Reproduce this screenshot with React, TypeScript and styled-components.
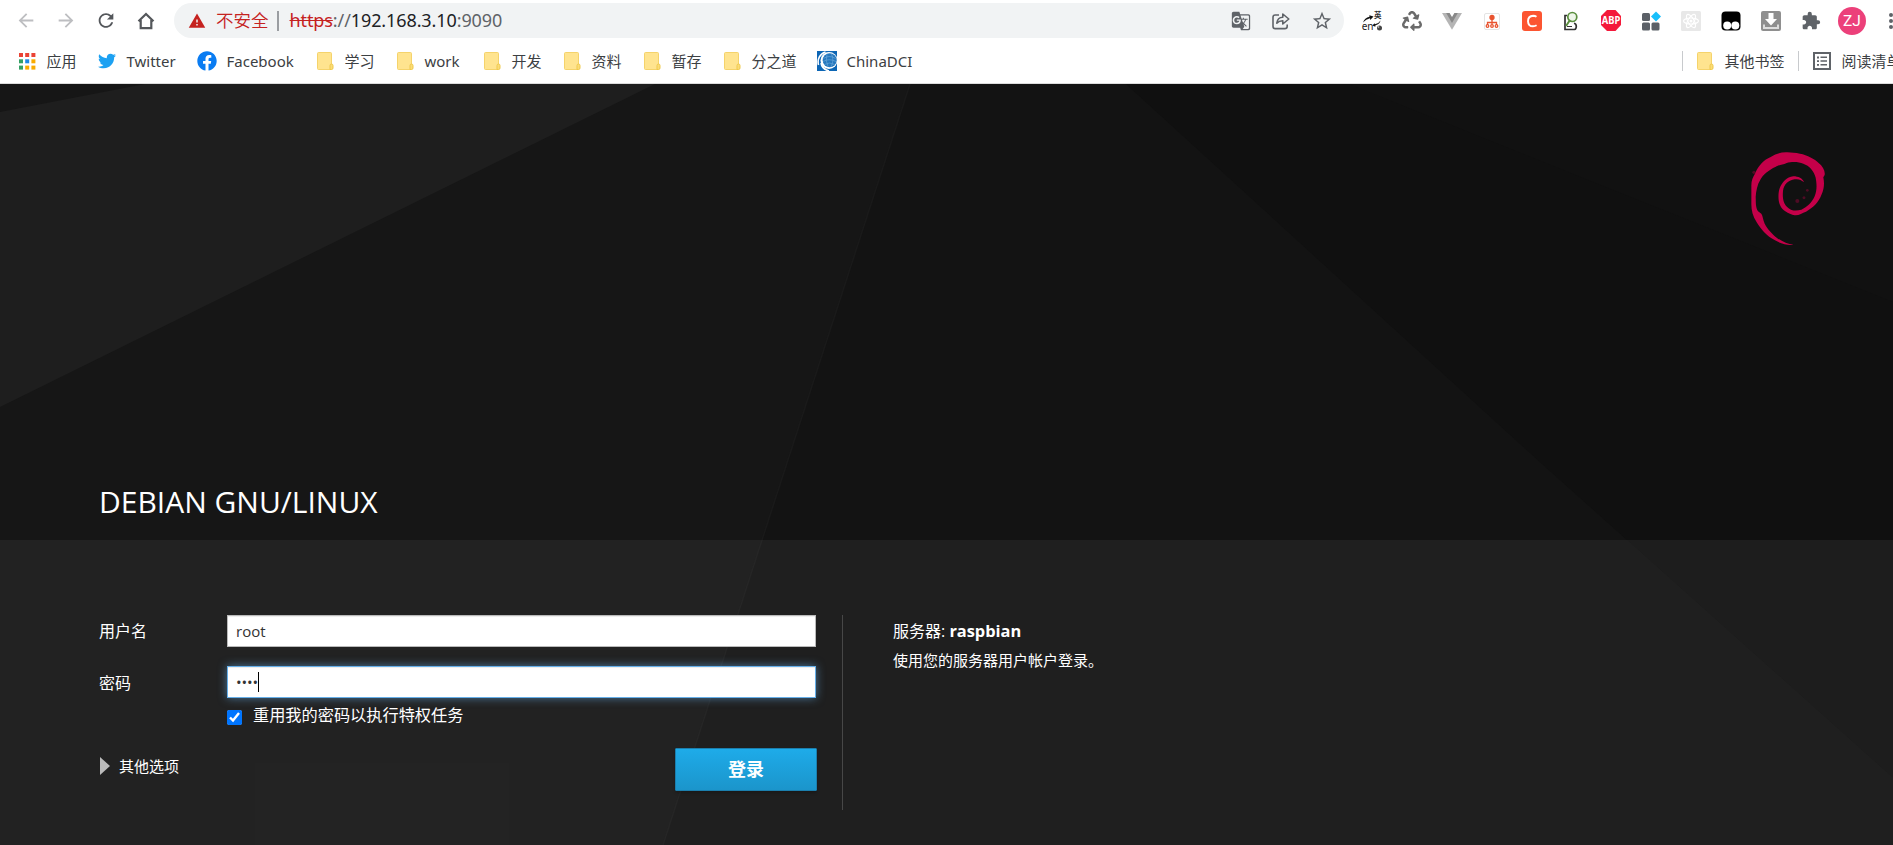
import React from "react";
import styled, { createGlobalStyle, css } from "styled-components";
import { FaTwitter, FaFacebook, FaRecycle } from "react-icons/fa";
import { MdExtension, MdStarBorder, MdGTranslate, MdArrowBack, MdArrowForward, MdRefresh, MdWarning } from "react-icons/md";

const GlobalStyle = createGlobalStyle`
  html, body { margin: 0; padding: 0; background: #fff; }
  body { overflow: hidden; font-family: "Open Sans", "Noto Sans CJK SC", sans-serif; }
  * { box-sizing: border-box; }
`;

const Window = styled.div`
  display: flex;
  flex-direction: column;
  width: 1893px;
  height: 845px;
  overflow: hidden;
`;

const Chrome = styled.header`
  display: flex;
  flex-direction: column;
  flex: none;
  height: 84px;
  background: #fff;
  border-bottom: 1px solid #dcdcdc;
  font-family: "Noto Sans", "Noto Sans CJK SC", sans-serif;
`;

const Toolbar = styled.div`
  display: flex;
  align-items: center;
  height: 41px;
  padding-left: 15px;
`;

const NavButton = styled.span<{ $muted?: boolean }>`
  display: flex;
  justify-content: center;
  flex: none;
  width: 22px;
  margin-right: 18px;
  color: ${(p) => (p.$muted ? "#bdbec1" : "#54575b")};
`;

const Omnibox = styled.div`
  display: flex;
  align-items: center;
  flex: none;
  width: 1170px;
  height: 35px;
  margin-left: -1px;
  padding: 0 11px 0 14px;
  border-radius: 18px;
  background: #f1f3f4;
  font-size: 17.5px;
  line-height: 35px;
  white-space: nowrap;
`;

const NotSecure = styled.span`
  margin-left: 10px;
  color: #c5221f;
  font-weight: 350;
  line-height: 33px;
`;

const OmniDivider = styled.span`
  width: 2px;
  height: 20px;
  margin: 0 11px 0 8px;
  background: #9a9da1;
`;

const Url = styled.span`
  flex: 1;
  color: #5f6368;
  font-size: 18px;
  line-height: 33px;
  letter-spacing: -0.1px;
  s { color: #c5221f; }
  b { font-weight: 400; color: #202124; }
`;

const OmniActions = styled.span`
  display: flex;
  align-items: center;
  gap: 20px;
  color: #5f6368;
  svg { display: block; }
`;

const Extensions = styled.div`
  display: flex;
  align-items: center;
  gap: 19.9px;
  margin-left: 18px;
  svg { display: block; flex: none; }
`;

const Avatar = styled.span`
  flex: none;
  width: 28px;
  height: 28px;
  margin-left: 17px;
  border-radius: 50%;
  background: #ec407a;
  color: #fff;
  font: 15.5px/28px Roboto, sans-serif;
  text-align: center;
`;

const MenuDots = styled.span`
  display: flex;
  flex-direction: column;
  gap: 2px;
  margin-left: -4px;
  i { width: 4px; height: 4px; border-radius: 50%; background: #5f6368; }
`;

const BookmarksBar = styled.nav`
  display: flex;
  align-items: center;
  height: 40px;
  padding-left: 17px;
  font-size: 15px;
  line-height: 22px;
  color: #3c4043;
  white-space: nowrap;
`;

const Bookmark = styled.span<{ $width?: number }>`
  display: flex;
  align-items: center;
  flex: none;
  gap: 9.5px;
  ${(p) => p.$width && css`width: ${p.$width}px;`}
`;

const BookmarkName = styled.span`
  padding-bottom: 1px;
`;

const BookmarkIcon = styled.span`
  display: flex;
  justify-content: center;
  width: 20px;
  svg { display: block; }
`;

const Spacer = styled.span`
  flex: 1;
`;

const BarDivider = styled.span<{ $gap: number }>`
  flex: none;
  width: 1px;
  height: 20px;
  margin-right: ${(p) => p.$gap}px;
  background: #c8cacd;
`;

const Page = styled.main`
  position: relative;
  display: flex;
  flex-direction: column;
  flex: 1;
  color: #fff;
`;

const Backdrop = styled.svg`
  position: absolute;
  inset: 0;
  display: block;
`;

const Brand = styled.section`
  position: relative;
  display: flex;
  flex-direction: column;
  justify-content: space-between;
  height: 456px;
  padding: 68px 68px 16px 99px;
`;

const Swirl = styled.svg`
  align-self: flex-end;
  display: block;
  width: 74px;
  height: 93.3px;
  overflow: visible;
`;

const Title = styled.h1`
  margin: 0;
  font-size: 30px;
  font-weight: 400;
  line-height: 44px;
`;

const LoginPanel = styled.section`
  position: relative;
  display: flex;
  align-items: flex-start;
  flex: 1;
  padding: 75px 0 0 99px;
  background: rgba(255, 255, 255, 0.055);
`;

const Form = styled.div`
  width: 718px;
`;

const Field = styled.div`
  display: flex;
  align-items: center;
  height: 32px;
  margin-bottom: 19px;
`;

const Label = styled.label<{ $drop?: number }>`
  width: 128px;
  padding-top: ${(p) => p.$drop ?? 0}px;
  font-size: 16px;
  line-height: 32px;
`;

const TextBox = styled.div<{ $focused?: boolean }>`
  display: flex;
  align-items: center;
  width: 589px;
  height: 32px;
  padding: 0 8px;
  border: 1px solid #bababa;
  background: #fff;
  color: #333;
  font-size: 15px;
  line-height: 30px;
  box-shadow: inset 0 1px 1px rgba(0, 0, 0, 0.075);
  ${(p) =>
    p.$focused &&
    css`
      border-color: #66afe9;
      box-shadow: inset 0 1px 1px rgba(0, 0, 0, 0.075), 0 0 10px rgba(102, 175, 233, 0.6);
      letter-spacing: -0.15px;
    `}
`;

const Caret = styled.i`
  width: 1px;
  height: 20px;
  background: #000;
`;

const Reuse = styled.label`
  display: flex;
  align-items: center;
  height: 22px;
  margin: -13px 0 0 128px;
  font-size: 16.2px;
  line-height: 22px;
  input { width: 15px; height: 15px; margin: 4px 11px 0 0; }
`;

const Actions = styled.div`
  display: flex;
  justify-content: space-between;
  align-items: flex-start;
  margin-top: 22px;
`;

const Options = styled.span`
  display: flex;
  align-items: center;
  gap: 9px;
  height: 36px;
  padding-left: 1px;
  font-size: 15px;
  line-height: 34px;
  &::before {
    content: "";
    border-left: 10px solid #bbb;
    border-top: 9px solid transparent;
    border-bottom: 9px solid transparent;
  }
`;

const LoginButton = styled.button`
  width: 142px;
  height: 43px;
  padding: 0;
  border: 1px solid #1b7fae;
  border-radius: 1px;
  background: linear-gradient(#1eabe9, #1b95cb);
  box-shadow: 0 2px 3px rgba(0, 0, 0, 0.2);
  color: #fff;
  font: 700 18px/41px "Open Sans", "Noto Sans CJK SC", sans-serif;
`;

const ServerInfo = styled.aside`
  height: 195px;
  margin-left: 25px;
  padding: 4px 0 0 50px;
  border-left: 1px solid #474747;
  font-size: 16px;
  line-height: 24px;
  b { font-size: 16.4px; }
  p { margin: 6px 0 0; font-size: 15px; line-height: 22px; }
`;

const DebianSwirl = () => (
  <Swirl viewBox="93 65 222 280" fill="#c40049">
    <path d="M220 343C208 346 185 342 165 330C140 318 122 296 110 276C98 258 94 240 94 222V165C94 150 98 142 106 128C115 106 132 88 152 80C168 70 185 65 202 66C215 68 226 67 240 70C262 74 284 86 296 98C308 108 316 120 314 134L310 141C314 160 312 176 305 192C296 216 280 232 258 244C246 248 238 256 224 255C205 250 186 240 180 224C174 212 174 188 179 174C186 156 200 140 220 138C235 138 248 144 252 156C243 149 236 145 224 147C206 150 192 160 189 182C187 204 190 222 204 232C214 242 230 242 244 238C262 230 276 216 284 198C292 180 290 158 287 142C282 122 268 106 250 100C236 94 214 94 200 98C188 104 180 102 166 110C148 118 128 134 121 148C112 162 108 182 107 200C108 216 106 230 114 243L124 250C129 258 128 266 134 280C142 296 158 312 170 322C186 334 204 342 220 343Z" />
    <g opacity=".35">
      <circle cx="232" cy="212" r="6" />
      <circle cx="252" cy="202" r="4.500" />
      <circle cx="262" cy="180" r="4" />
      <circle cx="102" cy="126" r="5" />
    </g>
  </Swirl>
);

const HomeIcon = () => (
  <svg width="20" height="20" viewBox="0 0 20 20" fill="none" stroke="currentColor" strokeWidth="2.2">
    <path d="M2.5 10.3 10 3l7.5 7.3M4.7 9v8.2h10.6V9" />
  </svg>
);

const ShareIcon = () => (
  <svg width="20" height="20" viewBox="0 0 20 20" fill="none" stroke="currentColor" strokeWidth="1.6" strokeLinejoin="round">
    <path d="M8 4H4.2Q2 4 2 6.2v9Q2 17.6 4.2 17.6h9.6q2.4 0 2.4-2.4v-1.700" />
    <path d="M5.8 12.2c.5-4.2 3-6 6-6V3l6 5-6 5V9.800c-2.800 0-4.500.7-6 2.400z" />
  </svg>
);

const AppsIcon = () => {
  const colors = ["#ea4335", "#ea4335", "#ea4335", "#34a064", "#1e88e5", "#f9ab00", "#34a064", "#f9ab00", "#f9ab00"];
  return (
    <svg width="18" height="18" viewBox="0 0 18 18">
      {colors.map((c, i) => (
        <rect key={i} x={1 + (i % 3) * 6.2} y={1 + Math.floor(i / 3) * 6.3} width="4" height="4" fill={c} />
      ))}
    </svg>
  );
};

const FolderIcon = () => (
  <svg width="18" height="20" viewBox="0 0 18 20">
    <rect x="1.5" y="1.5" width="14" height="17" rx="1" fill="#ffe48f" stroke="#f5d36b" />
    <path d="M14 18.500v-4q0-1.500 1.500-1.500t1.500 1.500V17q0 1.500-1.500 1.500z" fill="#fbdc77" stroke="#efc94c" />
  </svg>
);

const GlobeIcon = () => (
  <svg width="20" height="20" viewBox="0 0 20 20">
    <rect width="20" height="20" fill="#0d66b5" />
    <circle cx="12" cy="9.500" r="8.500" fill="#fff" />
    <circle cx="12.700" cy="9.200" r="7" fill="#2678be" />
    <path d="M6.500 7.500q6-4 12 0M6 10.500q6-3.500 13 0M7.500 13.500q5-3 10 0M10 3.500q-2 6 1 12M14.500 3q3 6-.5 13" fill="none" stroke="#7db4e0" strokeWidth=".5" />
    <path d="M1.500 14C0 8 3 2.500 8.500 1M4 12q1 6 8 8" fill="none" stroke="#fff" strokeWidth="1.600" />
    <path d="M14.500 19.500Q19 17 20 12v8z" fill="#0d66b5" />
  </svg>
);

const ReadingListIcon = () => (
  <svg width="20" height="20" viewBox="0 0 20 20" fill="#5f6368">
    <rect x="2" y="2" width="16" height="16" fill="none" stroke="#5f6368" strokeWidth="2" />
    <path d="M5 5.500h2v2H5zM8.500 5.500H15v1.600H8.500zM5 9.200h2v1.800H5zM8.500 9.200H15v1.600H8.500zM5 13h2v1.800H5zM8.500 13H15v1.600H8.500z" />
  </svg>
);

const TranslateExtension = () => (
  <svg width="20" height="20" viewBox="0 0 20 20" overflow="visible">
    <text x="-.3" y="19" fontSize="10" fontFamily="Noto Sans" fill="#222">en</text>
    <text x="12" y="7" fontSize="7.500" fontWeight="700" fontFamily="Noto Sans CJK SC" fill="#333">英</text>
    <path d="M1 11.500Q2.500 6.800 7.500 5.700L7.300 4.300 11.500 5.500 8.300 9 8 7.300Q4 8 1 11.500zM18.500 9.500q-.5 3.500-5 4.800l-.2 1.500-3-1.300 2.400-2.200.2 1q4-.8 5.600-3.800z" fill="#111" />
    <circle cx="17.500" cy="17" r="2.500" fill="#444" /><circle cx="16.500" cy="16" r=".8" fill="#ddd" />
  </svg>
);

const VueIcon = () => (
  <svg width="20" height="20" viewBox="0 0 20 20">
    <path d="M0 2h20L10 18.800z" fill="#b5b5b5" />
    <path d="M4.200 2h11.600L10 12z" fill="#888" />
    <path d="M7.600 2h4.800L10 6z" fill="#fff" />
  </svg>
);

const TreeIcon = () => (
  <svg width="20" height="20" viewBox="0 0 20 20">
    <rect x="2.500" y="2.500" width="15" height="16" rx="1.500" fill="#fff" stroke="#e4e4e4" />
    <g fill="none" stroke="#e8532f" strokeWidth="1.300">
      <circle cx="10" cy="6.500" r="2" fill="#e8532f" />
      <path d="M10 8v5.500M5.500 14v-2.500h9V14" />
      <circle cx="5.500" cy="15" r="1.300" /><circle cx="10" cy="15" r="1.300" /><circle cx="14.500" cy="15" r="1.300" />
    </g>
  </svg>
);

const CIcon = () => (
  <svg width="20" height="20" viewBox="0 0 20 20">
    <rect width="20" height="20" rx="3" fill="#fc5531" />
    <path d="M14.500 5.700Q13 4.700 11.200 4.700 6 5 6 10.200 6.200 15.300 11 15.300q2 0 3.600-1" fill="none" stroke="#fff" strokeWidth="1.900" />
  </svg>
);

const SearchPageIcon = () => (
  <svg width="20" height="20" viewBox="0 0 20 20" fill="none">
    <path d="M6 4.500H4v14h9.500q1.800-.3 1.800-3.200 0-2.500-2.300-3.100" stroke="#333" strokeWidth="1.700" />
    <circle cx="11.300" cy="6" r="4.500" fill="#eef6e9" stroke="#5b8f3f" strokeWidth="1.700" />
    <path d="M8.700 9.500 5 15" stroke="#5b8f3f" strokeWidth="2" /><path d="M6 15.500h5" stroke="#333" />
  </svg>
);

const AbpIcon = () => (
  <svg width="20" height="21" viewBox="0 0 20 21">
    <path d="M6 0h8.500L20 6v9l-5.500 6H6L0 15V6z" fill="#f4193b" />
    <text x="10" y="14.200" textAnchor="middle" fontSize="10" fontWeight="700" fontFamily="Noto Sans" fill="#fff" textLength="18.500" lengthAdjust="spacingAndGlyphs">ABP</text>
  </svg>
);

const TilesIcon = () => (
  <svg width="20" height="20" viewBox="0 0 20 20" fill="#5b6067">
    <rect x="1" y="2" width="8" height="8" rx="1.500" /><rect x="1" y="11.500" width="8" height="8" rx="1.500" />
    <rect x="10.500" y="11.500" width="8" height="8" rx="1.500" />
    <path d="M15 .5 20 5.500l-5 5-5-5z" fill="#18bffb" />
  </svg>
);

const ReactDevIcon = () => (
  <svg width="20" height="20" viewBox="0 0 20 20">
    <rect width="20" height="20" rx="1.500" fill="#e8e8e8" />
    <g fill="none" stroke="#fff" strokeWidth="1.200">
      <ellipse cx="10" cy="10" rx="7.500" ry="3" /><ellipse cx="10" cy="10" rx="7.500" ry="3" transform="rotate(60 10 10)" />
      <ellipse cx="10" cy="10" rx="7.500" ry="3" transform="rotate(120 10 10)" />
    </g>
    <circle cx="10" cy="10" r="1.500" fill="#fff" />
  </svg>
);

const MonkeyIcon = () => (
  <svg width="20" height="20" viewBox="0 0 20 20">
    <rect x=".5" y=".5" width="19" height="19" rx="4" />
    <circle cx="6.200" cy="14.500" r="4" fill="#fff" /><circle cx="14.300" cy="14.500" r="4" fill="#fff" />
  </svg>
);

const DownloadIcon = () => (
  <svg width="20" height="20" viewBox="0 0 20 20">
    <rect width="20" height="20" rx="2" fill="#8f8f8f" />
    <path d="M3 13.500V17h14v-3.500" fill="none" stroke="#ddd" strokeWidth="2" />
    <path d="M7.500 2h5v6H16l-6 6.500L4 8h3.500z" fill="#fff" />
  </svg>
);

const folder = <FolderIcon />;
const bookmarks: { icon: React.ReactNode; name: string; width: number }[] = [
  { icon: <AppsIcon />, name: "应用", width: 80 },
  { icon: <FaTwitter size={18} color="#1da1f2" />, name: "Twitter", width: 100 },
  { icon: <FaFacebook size={20} color="#0a7cf2" />, name: "Facebook", width: 118 },
  { icon: folder, name: "学习", width: 80 },
  { icon: folder, name: "work", width: 87 },
  { icon: folder, name: "开发", width: 80 },
  { icon: folder, name: "资料", width: 80 },
  { icon: folder, name: "暂存", width: 80 },
  { icon: folder, name: "分之道", width: 95 },
  { icon: <GlobeIcon />, name: "ChinaDCI", width: 100 },
];

export default function App() {
  return (
    <Window>
      <GlobalStyle />
      <Chrome>
        <Toolbar>
          <NavButton $muted><MdArrowBack size={23} /></NavButton>
          <NavButton $muted><MdArrowForward size={23} /></NavButton>
          <NavButton><MdRefresh size={25} /></NavButton>
          <NavButton><HomeIcon /></NavButton>
          <Omnibox>
            <MdWarning size={18} color="#c5221f" />
            <NotSecure>不安全</NotSecure>
            <OmniDivider />
            <Url><s>https</s>://<b>192.168.3.10</b>:9090</Url>
            <OmniActions>
              <MdGTranslate size={20} />
              <ShareIcon />
              <MdStarBorder size={22} />
            </OmniActions>
          </Omnibox>
          <Extensions>
            <TranslateExtension />
            <FaRecycle size={20} color="#6b6b6b" />
            <VueIcon />
            <TreeIcon />
            <CIcon />
            <SearchPageIcon />
            <AbpIcon />
            <TilesIcon />
            <ReactDevIcon />
            <MonkeyIcon />
            <DownloadIcon />
            <MdExtension size={20} color="#5f6368" />
          </Extensions>
          <Avatar>ZJ</Avatar>
          <Spacer />
          <MenuDots><i /><i /><i /></MenuDots>
        </Toolbar>
        <BookmarksBar>
          {bookmarks.map((b) => (
            <Bookmark key={b.name} $width={b.width}>
              <BookmarkIcon>{b.icon}</BookmarkIcon>
              <BookmarkName>{b.name}</BookmarkName>
            </Bookmark>
          ))}
          <Spacer />
          <BarDivider $gap={12} />
          <Bookmark $width={103}>
            <BookmarkIcon>{folder}</BookmarkIcon>
            <BookmarkName>其他书签</BookmarkName>
          </Bookmark>
          <BarDivider $gap={13} />
          <Bookmark $width={81}>
            <BookmarkIcon><ReadingListIcon /></BookmarkIcon>
            <BookmarkName>阅读清单</BookmarkName>
          </Bookmark>
        </BookmarksBar>
      </Chrome>
      <Page>
        <Backdrop width="1893" height="761" viewBox="0 0 1893 761">
          <rect width="1893" height="761" fill="#161616" />
          <path d="M0 28 145 0H655L0 323z" fill="#1e1e1e" />
          <path d="M910 0H1893V761H663z" fill="#131313" />
          <path d="M1126 0H1893V694L1542 380z" fill="#101010" />
          <path d="M1349 0H1893V218z" fill="#111" />
          <path d="M910 0 663 761" stroke="#1a1a1a" strokeWidth="1.500" />
        </Backdrop>
        <Brand>
          <DebianSwirl />
          <Title>DEBIAN GNU/LINUX</Title>
        </Brand>
        <LoginPanel>
          <Form>
            <Field>
              <Label>用户名</Label>
              <TextBox>root</TextBox>
            </Field>
            <Field>
              <Label $drop={2}>密码</Label>
              <TextBox $focused>••••<Caret /></TextBox>
            </Field>
            <Reuse>
              <input type="checkbox" defaultChecked />
              重用我的密码以执行特权任务
            </Reuse>
            <Actions>
              <Options>其他选项</Options>
              <LoginButton>登录</LoginButton>
            </Actions>
          </Form>
          <ServerInfo>
            服务器: <b>raspbian</b>
            <p>使用您的服务器用户帐户登录。</p>
          </ServerInfo>
        </LoginPanel>
      </Page>
    </Window>
  );
}
